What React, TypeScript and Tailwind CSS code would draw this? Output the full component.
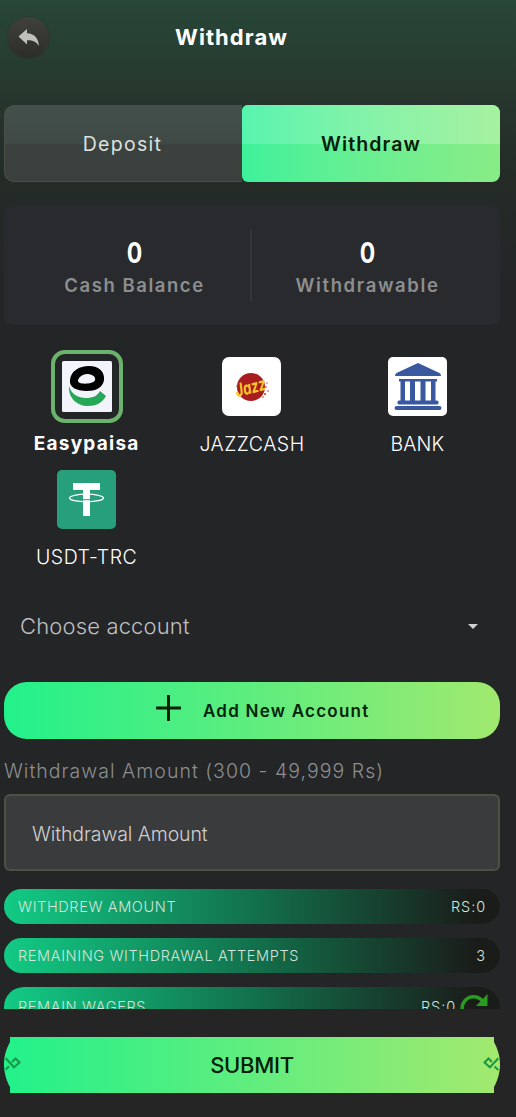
import React, { useState } from 'react';

const EasypaisaIcon = () => (
  <svg width="50" height="51" viewBox="0 0 50 51">
    <rect width="50" height="51" rx="1.5" fill="#f3f4fb" />
    <path fill="#000" fillRule="evenodd" d="M8 19C9 10 17 5 27 5C37 5 43 11 42 19C41 27 33 30 25 30C14 30 7 26 8 19ZM16 20C16 22 20 23 26 22.500C31 22 34 20 33 17C32 14 28 13 25 13C20 13 16 17 16 20Z" />
    <path fill="#27a758" d="M7 25C9 33 16 37 24 37C31 37 35 35 38 30L44 35C40 42 34 45 26 45C15 45 6 37 7 25Z" />
  </svg>
);

const JazzIcon = () => (
  <svg width="59" height="59" viewBox="0 0 59 59">
    <rect width="59" height="59" rx="7" fill="#fff" />
    <circle cx="29" cy="30" r="14" fill="#a81d20" />
    <g fill="#b5322b">
      <circle cx="44" cy="30" r="0.800" />
      <circle cx="46" cy="34" r="0.800" />
      <circle cx="43" cy="37" r="1" />
      <circle cx="15" cy="29" r="0.800" />
      <circle cx="41" cy="40" r="0.800" />
      <circle cx="45" cy="26" r="0.700" />
    </g>
    <text
      transform="translate(15 40) rotate(-14)"
      fontFamily="Inter, sans-serif"
      fontSize="18"
      fontWeight="700"
      fontStyle="italic"
      textLength="31"
      lengthAdjust="spacingAndGlyphs"
      fill="#fcc62d"
    >
      Jazz
    </text>
  </svg>
);

const BankIcon = () => (
  <svg width="59" height="59" viewBox="0 0 59 59">
    <rect width="59" height="59" rx="5" fill="#fff" />
    <g fill="#39589f">
      <path d="M30 6L51.500 16Q53 17 53 19H7Q7 17 8.500 16Z" />
      <rect x="11" y="22" width="38" height="2.500" />
      <rect x="12.500" y="24" width="4.500" height="20" />
      <rect x="22" y="24" width="5" height="20" />
      <rect x="32.500" y="24" width="5" height="20" />
      <rect x="43" y="24" width="4.500" height="20" />
      <rect x="9.500" y="43.500" width="41" height="4" rx="1.500" />
      <rect x="6.500" y="49" width="47" height="4" rx="2" />
    </g>
  </svg>
);

const TetherIcon = () => (
  <svg width="59" height="59" viewBox="0 0 59 59">
    <rect width="59" height="59" rx="5" fill="#289f7b" />
    <path fill="#fff" d="M16 13H43V20H33V46H26V20H16Z" />
    <ellipse cx="29.500" cy="28" rx="17" ry="3.800" fill="none" stroke="#fff" strokeWidth="1.300" />
    <path d="M26 29.700H33" stroke="#289f7b" strokeWidth="1" />
  </svg>
);

const methods = [
  { id: 'easypaisa', name: 'Easypaisa', icon: <EasypaisaIcon />, label: 'text-[19px] font-bold tracking-[1.25px]' },
  { id: 'jazzcash', name: 'JAZZCASH', icon: <JazzIcon />, label: 'text-[19.5px] font-light tracking-[0.5px]' },
  { id: 'bank', name: 'BANK', icon: <BankIcon />, label: 'text-[19.5px] font-light tracking-[0.1px]' },
  { id: 'usdt', name: 'USDT-TRC', icon: <TetherIcon />, label: 'text-[19.5px] font-light tracking-[0.5px]' },
];

const StatRow = ({ label, value, tall, children }: { label: string; value: string; tall?: boolean; children?: React.ReactNode }) => (
  <div
    className={`flex shrink-0 items-center rounded-[20px] bg-[linear-gradient(90deg,#12cb85_0%,#12714d_50%,#1a1c19_95%)] px-3.5 text-[14.5px] font-light text-[#d3e5dc] ${
      tall ? 'h-10' : 'h-[35px]'
    }`}
  >
    <span className="tracking-[0.63px]">{label}</span>
    <span className="ml-auto tracking-[0.9px]">{value}</span>
    {children}
  </div>
);

const App = () => {
  const [tab, setTab] = useState('withdraw');
  const [method, setMethod] = useState('easypaisa');
  const [amount, setAmount] = useState('');

  return (
    <div className="flex h-[1117px] w-[516px] flex-col overflow-hidden bg-[#242527] bg-[linear-gradient(180deg,#284739_0px,#27392f_82px,#242d28_160px,#242a27_205px,#242527_280px)] pl-1 pr-4 font-['Inter','Liberation_Sans',sans-serif] text-white">
      <header className="flex h-[105px] shrink-0 items-start pt-[17px]">
        <button className="ml-1 flex size-[41px] items-center justify-center rounded-full bg-linear-to-b from-[#41413b] to-[#2c2d29] shadow-[0_0_2px_#292e29]">
          <svg width="22" height="18" viewBox="0 0 22 18" fill="#c0c1bf">
            <path d="M0.500 7.500L9 0V4.200C16 4.500 20.500 9 21 17C18 12.500 14 11 9 11.300V15.500Z" />
          </svg>
        </button>
        <h1 className="ml-[126px] mt-1.5 text-[22px] font-bold leading-7 tracking-[1.05px]">Withdraw</h1>
      </header>

      <div className="flex h-[77px] shrink-0 text-[19.5px]">
        <button
          onClick={() => setTab('deposit')}
          className="w-[238px] rounded-l-[10px] border border-r-0 border-[#4b5045] bg-[linear-gradient(180deg,#43504b_0%,#3f4945_51%,#3a423f_51%,#3c3f3d_100%)] pr-0.5 pt-0.5 tracking-[1.3px] text-[#dde1df]"
        >
          Deposit
        </button>
        <button
          onClick={() => setTab('withdraw')}
          className="relative flex-1 overflow-hidden rounded-md rounded-r-lg bg-linear-to-r from-[#3df19b] to-[#88ec86] pt-0.5 font-semibold tracking-[1.1px] text-[#072009]"
        >
          <span className="absolute inset-x-0 top-0 h-[39px] bg-linear-to-r from-[#57f4af] to-[#a6f1a0]" />
          <span className="relative">Withdraw</span>
        </button>
      </div>

      <section className="mt-[23px] flex h-[120px] shrink-0 items-center rounded-lg bg-[#282a2d]">
        <div className="flex w-[246px] flex-col items-center pl-[15px] pt-[5px]">
          <span className="scale-x-[.82] text-[28px] font-bold leading-8">0</span>
          <span className="mt-0.5 text-[18.5px] font-semibold leading-7 tracking-[1.55px] text-[#8d8e90]">Cash Balance</span>
        </div>
        <div className="h-[71px] w-0.5 bg-[#343639]" />
        <div className="flex flex-1 flex-col items-center pr-[17px] pt-[5px]">
          <span className="scale-x-[.82] text-[28px] font-bold leading-8">0</span>
          <span className="mt-0.5 text-[18.5px] font-semibold leading-7 tracking-[1.65px] text-[#8d8e90]">Withdrawable</span>
        </div>
      </section>

      <div className="mt-[25px] grid h-[225px] shrink-0 grid-cols-3 grid-rows-[113px_112px]">
        {methods.map((m) => (
          <button key={m.id} onClick={() => setMethod(m.id)} className="flex h-28 flex-col items-center">
            <span
              className={
                m.id === method
                  ? 'flex h-[73px] w-[72px] items-center justify-center rounded-[14px] border-4 border-[#6bb36c]'
                  : 'flex h-[73px] w-[72px] items-center justify-center'
              }
            >
              {m.icon}
            </span>
            <span className={`mt-[7px] whitespace-nowrap leading-7 ${m.label}`}>{m.name}</span>
          </button>
        ))}
      </div>

      <button className="mt-[26px] flex h-[50px] shrink-0 items-center justify-between pl-4 pr-[22px] text-[#bfc0c1]">
        <span className="text-[22px] font-light tracking-[0.15px]">Choose account</span>
        <svg width="10" height="5" viewBox="0 0 10 5" fill="#d0d0d1">
          <path d="M0 0H10L5 5Z" />
        </svg>
      </button>

      <button className="mt-[31px] flex h-[57px] shrink-0 items-center rounded-[23px] bg-[linear-gradient(90deg,#22f18a,#5eed7e_50%,#a1e96f)] pl-[152px] text-[#08240b]">
        <svg width="25" height="26" viewBox="0 0 25 26" stroke="#082005" strokeWidth="3" className="-mt-1.5">
          <path d="M12.500 0V26M0 13H25" />
        </svg>
        <span className="ml-[22px] mt-0.5 text-[17px] font-semibold tracking-[1.23px]">Add New Account</span>
      </button>

      <label className="mt-[18px] h-[37px] shrink-0 whitespace-nowrap text-[19.5px] font-light leading-7 tracking-[1.03px] text-[#8c8e90]">
        Withdrawal Amount (300 - 49,999 Rs)
      </label>
      <input
        value={amount}
        onChange={(e) => setAmount(e.target.value)}
        placeholder="Withdrawal Amount"
        className="h-[77px] w-full shrink-0 rounded-md border-2 border-[#504f43] bg-[#3a3b3d] px-[26px] pt-0.5 text-[19.5px] font-light tracking-[-0.1px] text-white outline-none placeholder:text-[#d0d0d1]"
      />

      <div className="mt-[18px] flex h-[120px] shrink-0 flex-col gap-3.5 overflow-hidden">
        <StatRow label="WITHDREW AMOUNT" value="RS:0" />
        <StatRow label="REMAINING WITHDRAWAL ATTEMPTS" value="3" />
        <StatRow label="REMAIN WAGERS" value="RS:0" tall>
          <svg width="28" height="28" viewBox="0 0 28 28" fill="none" className="-mr-0.5 ml-1">
            <path d="M22.500 8A11.500 11.500 0 1 0 24.500 19" stroke="#2a9c20" strokeWidth="3.500" />
            <path d="M27.500 1V13H16Z" fill="#2a9c20" />
          </svg>
        </StatRow>
      </div>

      <footer className="-ml-1 -mr-4 flex h-[108px] shrink-0 items-start bg-[#242524] pl-1 pr-4 pt-7">
        <button className="relative h-14 w-[496px] text-[22px] font-medium tracking-[-0.3px] text-[#061d08]">
          <svg width="496" height="56" viewBox="0 0 496 56" className="absolute inset-0">
            <defs>
              <linearGradient id="submit">
                <stop offset="0" stopColor="#22f18a" />
                <stop offset="0.500" stopColor="#61ed7e" />
                <stop offset="1" stopColor="#a3e96e" />
              </linearGradient>
            </defs>
            <path fill="url(#submit)" d="M6 0H490V5C493 11 496 17 496 28C496 36 493 45 490 50V56H6V50C3 45 0 36 0 28C0 17 3 11 6 5Z" />
            <g fill="none" stroke="#15994a" strokeWidth="2">
              <path d="M1.700 21.300L10 30.300L15.500 25.500L11.500 21.500L8 25M1.700 32.500L5 29.300" />
              <path d="M494.300 21.300L486 30.300L480.500 25.500L484.500 21.500L488 25M494.300 33L490.500 29.500" />
            </g>
          </svg>
          <span className="relative">SUBMIT</span>
        </button>
      </footer>
    </div>
  );
};

export default App;
